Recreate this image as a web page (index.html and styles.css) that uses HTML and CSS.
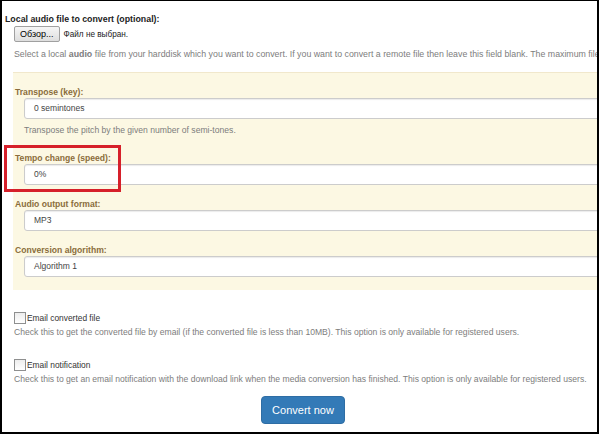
FILE: index.html
```html
<!DOCTYPE html>
<html>
<head>
<meta charset="utf-8">
<link rel="stylesheet" href="styles.css">
</head>
<body>
<div class="frame">
  <div class="content">
    <div class="field top-field">
      <div class="label">Local audio file to convert (optional):</div>
      <div class="file-row">
        <span class="file-btn">Обзор...</span>
        <span class="file-none">Файл не выбран.</span>
      </div>
      <div class="help">Select a local <b>audio</b> file from your harddisk which you want to convert. If you want to convert a remote file then leave this field blank. The maximum file size is 100MB.</div>
    </div>

    <div class="panel">
      <div class="pfield">
        <div class="plabel">Transpose (key):</div>
        <div class="input">0 semintones</div>
        <div class="help phelp">Transpose the pitch by the given number of semi-tones.</div>
      </div>
      <div class="pfield">
        <div class="plabel">Tempo change (speed):</div>
        <div class="input">0%</div>
      </div>
      <div class="pfield">
        <div class="plabel">Audio output format:</div>
        <div class="input">MP3</div>
      </div>
      <div class="pfield">
        <div class="plabel">Conversion algorithm:</div>
        <div class="input">Algorithm 1</div>
      </div>
    </div>

    <div class="check">
      <div class="check-row"><span class="box"></span><span class="check-label">Email converted file</span></div>
      <div class="help">Check this to get the converted file by email (if the converted file is less than 10MB). This option is only available for registered users.</div>
    </div>
    <div class="check">
      <div class="check-row"><span class="box"></span><span class="check-label">Email notification</span></div>
      <div class="help">Check this to get an email notification with the download link when the media conversion has finished. This option is only available for registered users.</div>
    </div>

    <div class="actions"><span class="convert">Convert now</span></div>
  </div>
  <div class="highlight"></div>
</div>
</body>
</html>
```
FILE: styles.css
```css
html, body { margin: 0; padding: 0; background: #fff; }
body { font-family: "Liberation Sans", Arial, sans-serif; color: #333; }
.frame {
  position: relative;
  width: 599px;
  height: 434px;
  box-sizing: border-box;
  border-top: 1px solid #000;
  border-left: 2px solid #000;
  border-right: 2px solid #000;
  border-bottom: 2px solid #000;
  overflow: hidden;
}
.content { width: 800px; padding-left: 3px; }
.label { font-size: 8.8px; font-weight: bold; line-height: 14px; margin-top: 11px; white-space: nowrap; color: #222; }
.file-row { display: flex; align-items: center; padding-left: 9px; height: 16px; }
.file-btn {
  font-size: 9px; height: 16px; line-height: 14px; box-sizing: border-box;
  padding: 0 5px; border: 1px solid #a0a0a0; border-radius: 2px;
  background: linear-gradient(#f6f6f6, #dedede); color: #000;
}
.file-none { font-size: 8.2px; margin-left: 4px; color: #222; }
.help { font-size: 8.6px; color: #7d7d7d; line-height: 12px; white-space: nowrap; }
.top-field .help { margin-top: 6px; padding-left: 9px; font-size: 8.8px; }
.panel {
  margin-top: 12px; margin-left: 8px;
  background: #fcf8e3; border-top: 1px solid #f1e8cc;
  padding: 14px 0 13px 2px;
  display: flex; flex-direction: column; gap: 14px;
}
.pfield { display: flex; flex-direction: column; }
.plabel { font-size: 8.6px; font-weight: bold; color: #8a6d3b; line-height: 11px; }
.input {
  margin-left: 9px; height: 21px; box-sizing: border-box;
  border: 1px solid #ccc; border-radius: 3px; background: #fff;
  box-shadow: inset 0 1px 1px rgba(0,0,0,.08);
  font-size: 8.5px; line-height: 19px; padding-left: 9px; color: #444;
}
.phelp { margin-left: 9px; margin-top: 5px; margin-bottom: 3px; }
.check { margin-top: 21px; padding-left: 9px; }
.check + .check { margin-top: 20px; }
.check-row { display: flex; align-items: center; height: 13px; }
.box { width: 12px; height: 12px; box-sizing: border-box; border: 1px solid #8e8f8f; background: linear-gradient(#ededed, #fff); }
.check-label { font-size: 8.4px; color: #333; margin-left: 1px; }
.check .help { margin-top: 2px; }
.actions { width: 592px; display: flex; justify-content: center; margin-top: 11px; }
.convert {
  background: #337ab7; border: 1px solid #2e6da4; border-radius: 4px; color: #fff;
  font-size: 11px; height: 28px; line-height: 26px; box-sizing: border-box; padding: 0 10px;
  margin-left: 4px;
}
.highlight {
  position: absolute; left: 2px; top: 144px; width: 117px; height: 47px;
  border: 3px solid #d6202a; box-sizing: border-box;
}
```
